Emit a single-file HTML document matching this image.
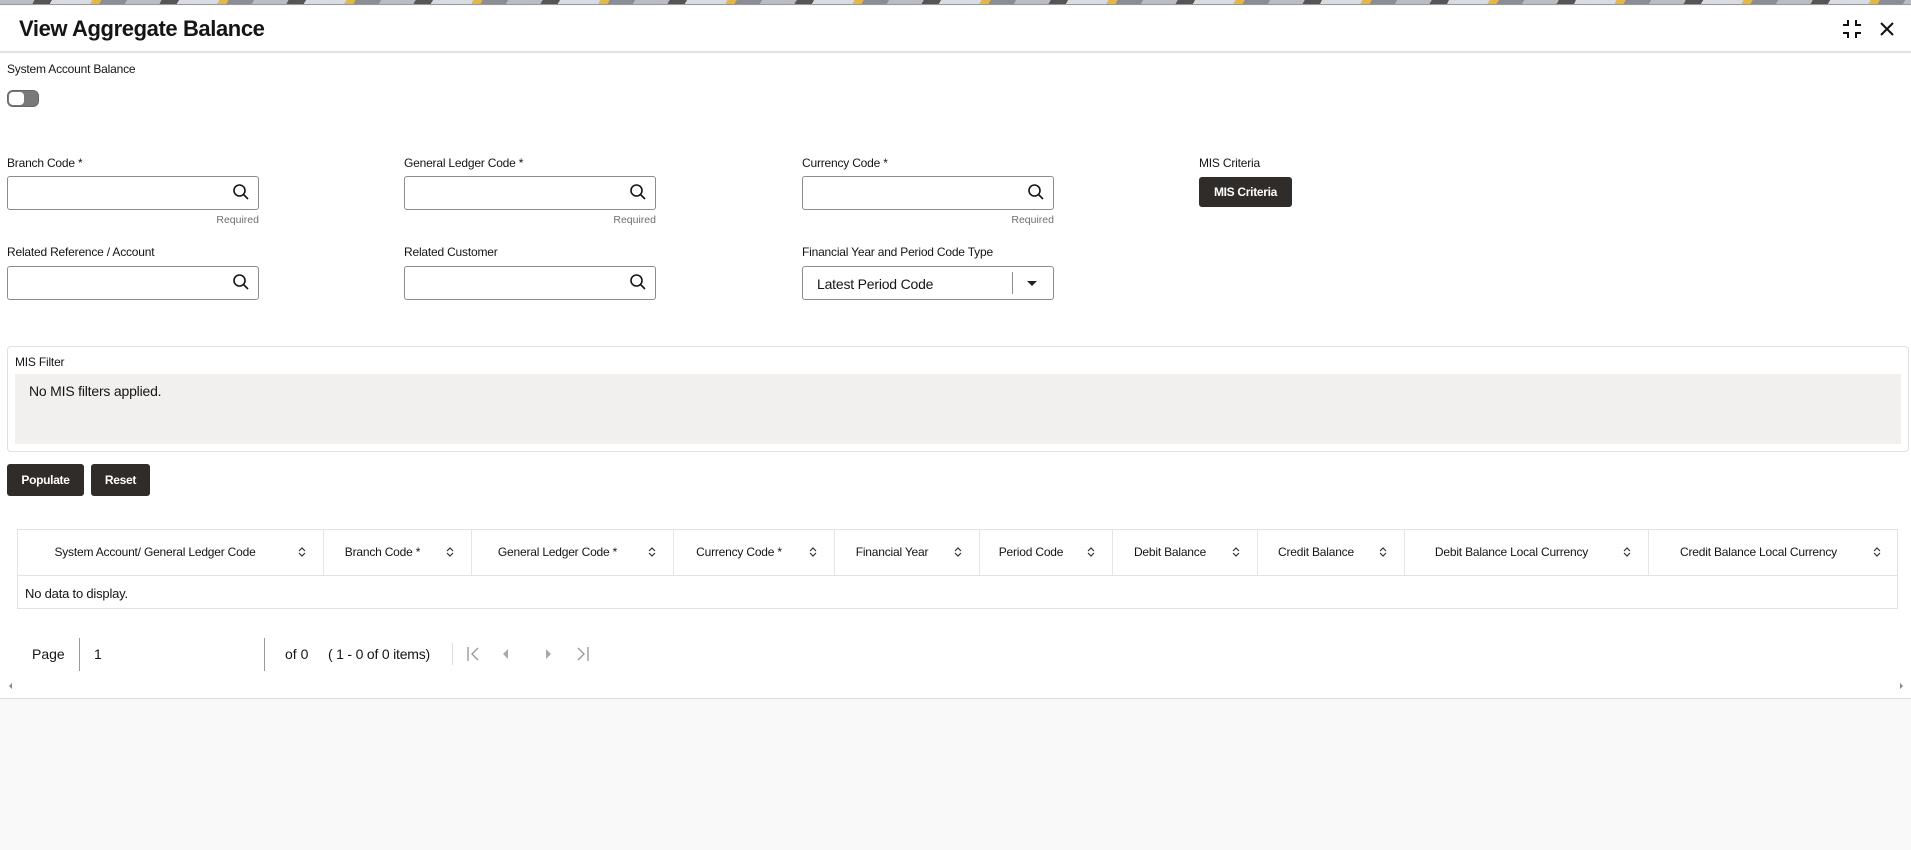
<!DOCTYPE html>
<html><head><meta charset="utf-8"><style>
*{box-sizing:border-box;margin:0;padding:0}
body{width:1911px;height:850px;overflow:hidden;font-family:"Liberation Sans",sans-serif;color:#161513;background:#f9f9f9;position:relative}
.abs{position:absolute}
.stripe{left:0;top:0;width:1911px;height:5px;background:repeating-linear-gradient(120deg,#b9bcc2 0 30px,#555 30px 45px,#d8dbe2 45px 80px,#e3b84a 80px 88px,#8a8d93 88px 110px);border-bottom:1px solid #999}
.panel{left:0;top:6px;width:1911px;height:693px;background:#fff;border-bottom:1px solid #ddd}
.title{left:19px;top:16px;font-size:22px;font-weight:bold;letter-spacing:-0.4px}
.hline{left:0;top:51px;width:1911px;height:2px;background:#e2e2e2}
.lbl{font-size:12px;color:#161513;letter-spacing:-0.2px}
.inp{width:252px;height:34px;border:1px solid #8d8c8a;border-radius:3px;background:#fff}
.req{font-size:10.5px;color:#6f6f6f;text-align:right;width:252px}
.btn{background:#2f2c29;color:#fff;font-size:12px;font-weight:bold;border-radius:3px;text-align:center;letter-spacing:-0.3px}
.th{top:529px;height:46px;font-size:12px;display:flex;align-items:center;justify-content:center;border-right:1px solid #e5e5e5;letter-spacing:-0.2px}
.sort{position:absolute;right:17px;top:18px;width:8px;height:10px}
</style></head><body>
<div class="abs stripe"></div>
<div class="abs panel"></div>
<div class="abs title">View Aggregate Balance</div>
<svg class="abs" style="left:1842px;top:19px" width="20" height="20" viewBox="0 0 20 20"><path d="M6 1v5H1M14 1v5h5M6 19v-5H1M14 19v-5h5" fill="none" stroke="#111" stroke-width="2"/></svg>
<svg class="abs" style="left:1880px;top:22px" width="14" height="14" viewBox="0 0 14 14"><path d="M1 1L13 13M13 1L1 13" stroke="#111" stroke-width="2"/></svg>
<div class="abs hline"></div>

<div class="abs lbl" style="left:7px;top:62px">System Account Balance</div>
<div class="abs" style="left:7px;top:90px;width:32px;height:17px;border-radius:6px;background:#7a7977;border:1px solid #666"><div style="position:absolute;left:1px;top:1px;width:15px;height:13px;border-radius:4px;background:#fff"></div></div>

<div class="abs lbl" style="left:7px;top:156px">Branch Code *</div>
<div class="abs lbl" style="left:404px;top:156px">General Ledger Code *</div>
<div class="abs lbl" style="left:802px;top:156px">Currency Code *</div>
<div class="abs lbl" style="left:1199px;top:156px">MIS Criteria</div>

<div class="abs inp" style="left:7px;top:176px"></div>
<div class="abs inp" style="left:404px;top:176px"></div>
<div class="abs inp" style="left:802px;top:176px"></div>
<div class="abs req" style="left:7px;top:214px">Required</div>
<div class="abs req" style="left:404px;top:214px">Required</div>
<div class="abs req" style="left:802px;top:214px">Required</div>
<div class="abs btn" style="left:1199px;top:177px;width:93px;height:30px;line-height:30px">MIS Criteria</div>

<div class="abs lbl" style="left:7px;top:245px">Related Reference / Account</div>
<div class="abs lbl" style="left:404px;top:245px">Related Customer</div>
<div class="abs lbl" style="left:802px;top:245px">Financial Year and Period Code Type</div>
<div class="abs inp" style="left:7px;top:266px"></div>
<div class="abs inp" style="left:404px;top:266px"></div>
<div class="abs inp" style="left:802px;top:266px"><span style="position:absolute;left:14px;top:9px;font-size:14px;letter-spacing:-0.2px">Latest Period Code</span><div style="position:absolute;left:209px;top:5px;width:1px;height:22px;background:#8d8c8a"></div><div style="position:absolute;left:224px;top:14px;border-left:5px solid transparent;border-right:5px solid transparent;border-top:5px solid #222"></div></div>

<svg class="abs" style="left:232px;top:183px" width="18" height="18" viewBox="0 0 18 18"><circle cx="7.5" cy="7.5" r="5.5" fill="none" stroke="#161513" stroke-width="1.6"/><path d="M11.5 11.5L16 16" stroke="#161513" stroke-width="1.6"/></svg>
<svg class="abs" style="left:629px;top:183px" width="18" height="18" viewBox="0 0 18 18"><circle cx="7.5" cy="7.5" r="5.5" fill="none" stroke="#161513" stroke-width="1.6"/><path d="M11.5 11.5L16 16" stroke="#161513" stroke-width="1.6"/></svg>
<svg class="abs" style="left:1027px;top:183px" width="18" height="18" viewBox="0 0 18 18"><circle cx="7.5" cy="7.5" r="5.5" fill="none" stroke="#161513" stroke-width="1.6"/><path d="M11.5 11.5L16 16" stroke="#161513" stroke-width="1.6"/></svg>
<svg class="abs" style="left:232px;top:273px" width="18" height="18" viewBox="0 0 18 18"><circle cx="7.5" cy="7.5" r="5.5" fill="none" stroke="#161513" stroke-width="1.6"/><path d="M11.5 11.5L16 16" stroke="#161513" stroke-width="1.6"/></svg>
<svg class="abs" style="left:629px;top:273px" width="18" height="18" viewBox="0 0 18 18"><circle cx="7.5" cy="7.5" r="5.5" fill="none" stroke="#161513" stroke-width="1.6"/><path d="M11.5 11.5L16 16" stroke="#161513" stroke-width="1.6"/></svg>

<div class="abs" style="left:7px;top:346px;width:1902px;height:106px;border:1px solid #e0e0e0;border-radius:4px"></div>
<div class="abs lbl" style="left:15px;top:355px">MIS Filter</div>
<div class="abs" style="left:15px;top:374px;width:1886px;height:70px;background:#f1f0ef"></div>
<div class="abs" style="left:29px;top:383px;font-size:14px;letter-spacing:-0.2px">No MIS filters applied.</div>

<div class="abs btn" style="left:7px;top:464px;width:77px;height:32px;line-height:32px">Populate</div>
<div class="abs btn" style="left:91px;top:464px;width:59px;height:32px;line-height:32px">Reset</div>

<div class="abs" style="left:17px;top:529px;width:1881px;height:80px;border:1px solid #e2e2e2"></div>
<div class="abs" style="left:17px;top:575px;width:1881px;height:1px;background:#e2e2e2"></div>
<div class="abs th" style="left:17px;width:307px;padding-right:30px">System Account/ General Ledger Code<svg class="sort" viewBox="0 0 8 10"><path d="M1 4L4 1L7 4M1 6L4 9L7 6" fill="none" stroke="#333" stroke-width="1.2"/></svg></div>
<div class="abs th" style="left:324px;width:148px;padding-right:30px">Branch Code *<svg class="sort" viewBox="0 0 8 10"><path d="M1 4L4 1L7 4M1 6L4 9L7 6" fill="none" stroke="#333" stroke-width="1.2"/></svg></div>
<div class="abs th" style="left:472px;width:202px;padding-right:30px">General Ledger Code *<svg class="sort" viewBox="0 0 8 10"><path d="M1 4L4 1L7 4M1 6L4 9L7 6" fill="none" stroke="#333" stroke-width="1.2"/></svg></div>
<div class="abs th" style="left:674px;width:161px;padding-right:30px">Currency Code *<svg class="sort" viewBox="0 0 8 10"><path d="M1 4L4 1L7 4M1 6L4 9L7 6" fill="none" stroke="#333" stroke-width="1.2"/></svg></div>
<div class="abs th" style="left:835px;width:145px;padding-right:30px">Financial Year<svg class="sort" viewBox="0 0 8 10"><path d="M1 4L4 1L7 4M1 6L4 9L7 6" fill="none" stroke="#333" stroke-width="1.2"/></svg></div>
<div class="abs th" style="left:980px;width:133px;padding-right:30px">Period Code<svg class="sort" viewBox="0 0 8 10"><path d="M1 4L4 1L7 4M1 6L4 9L7 6" fill="none" stroke="#333" stroke-width="1.2"/></svg></div>
<div class="abs th" style="left:1113px;width:145px;padding-right:30px">Debit Balance<svg class="sort" viewBox="0 0 8 10"><path d="M1 4L4 1L7 4M1 6L4 9L7 6" fill="none" stroke="#333" stroke-width="1.2"/></svg></div>
<div class="abs th" style="left:1258px;width:147px;padding-right:30px">Credit Balance<svg class="sort" viewBox="0 0 8 10"><path d="M1 4L4 1L7 4M1 6L4 9L7 6" fill="none" stroke="#333" stroke-width="1.2"/></svg></div>
<div class="abs th" style="left:1405px;width:244px;padding-right:30px">Debit Balance Local Currency<svg class="sort" viewBox="0 0 8 10"><path d="M1 4L4 1L7 4M1 6L4 9L7 6" fill="none" stroke="#333" stroke-width="1.2"/></svg></div>
<div class="abs th" style="left:1649px;width:249px;padding-right:30px;border-right:none">Credit Balance Local Currency<svg class="sort" viewBox="0 0 8 10"><path d="M1 4L4 1L7 4M1 6L4 9L7 6" fill="none" stroke="#333" stroke-width="1.2"/></svg></div>
<div class="abs" style="left:25px;top:586px;font-size:13px;letter-spacing:-0.2px">No data to display.</div>

<div class="abs" style="left:32px;top:646px;font-size:14px">Page</div>
<div class="abs" style="left:79px;top:638px;width:1px;height:33px;background:#999"></div>
<div class="abs" style="left:94px;top:646px;font-size:14px">1</div>
<div class="abs" style="left:264px;top:638px;width:1px;height:33px;background:#999"></div>
<div class="abs" style="left:285px;top:646px;font-size:14px">of 0</div>
<div class="abs" style="left:328px;top:646px;font-size:14px;letter-spacing:-0.2px">( 1 - 0 of 0 items)</div>
<div class="abs" style="left:452px;top:643px;width:1px;height:22px;background:#ddd"></div>
<svg class="abs" style="left:466px;top:646px" width="14" height="16" viewBox="0 0 14 16"><path d="M2 1V15M12 2L6 8L12 14" fill="none" stroke="#999" stroke-width="1.4"/></svg>
<div class="abs" style="left:503px;top:649px;border-top:5px solid transparent;border-bottom:5px solid transparent;border-right:5px solid #aaa"></div>
<div class="abs" style="left:546px;top:649px;border-top:5px solid transparent;border-bottom:5px solid transparent;border-left:5px solid #aaa"></div>
<svg class="abs" style="left:576px;top:646px" width="14" height="16" viewBox="0 0 14 16"><path d="M12 1V15M2 2L8 8L2 14" fill="none" stroke="#999" stroke-width="1.4"/></svg>
<div class="abs" style="left:9px;top:683px;border-top:3px solid transparent;border-bottom:3px solid transparent;border-right:3px solid #888"></div>
<div class="abs" style="left:1900px;top:683px;border-top:3px solid transparent;border-bottom:3px solid transparent;border-left:3px solid #888"></div>
</body></html>
